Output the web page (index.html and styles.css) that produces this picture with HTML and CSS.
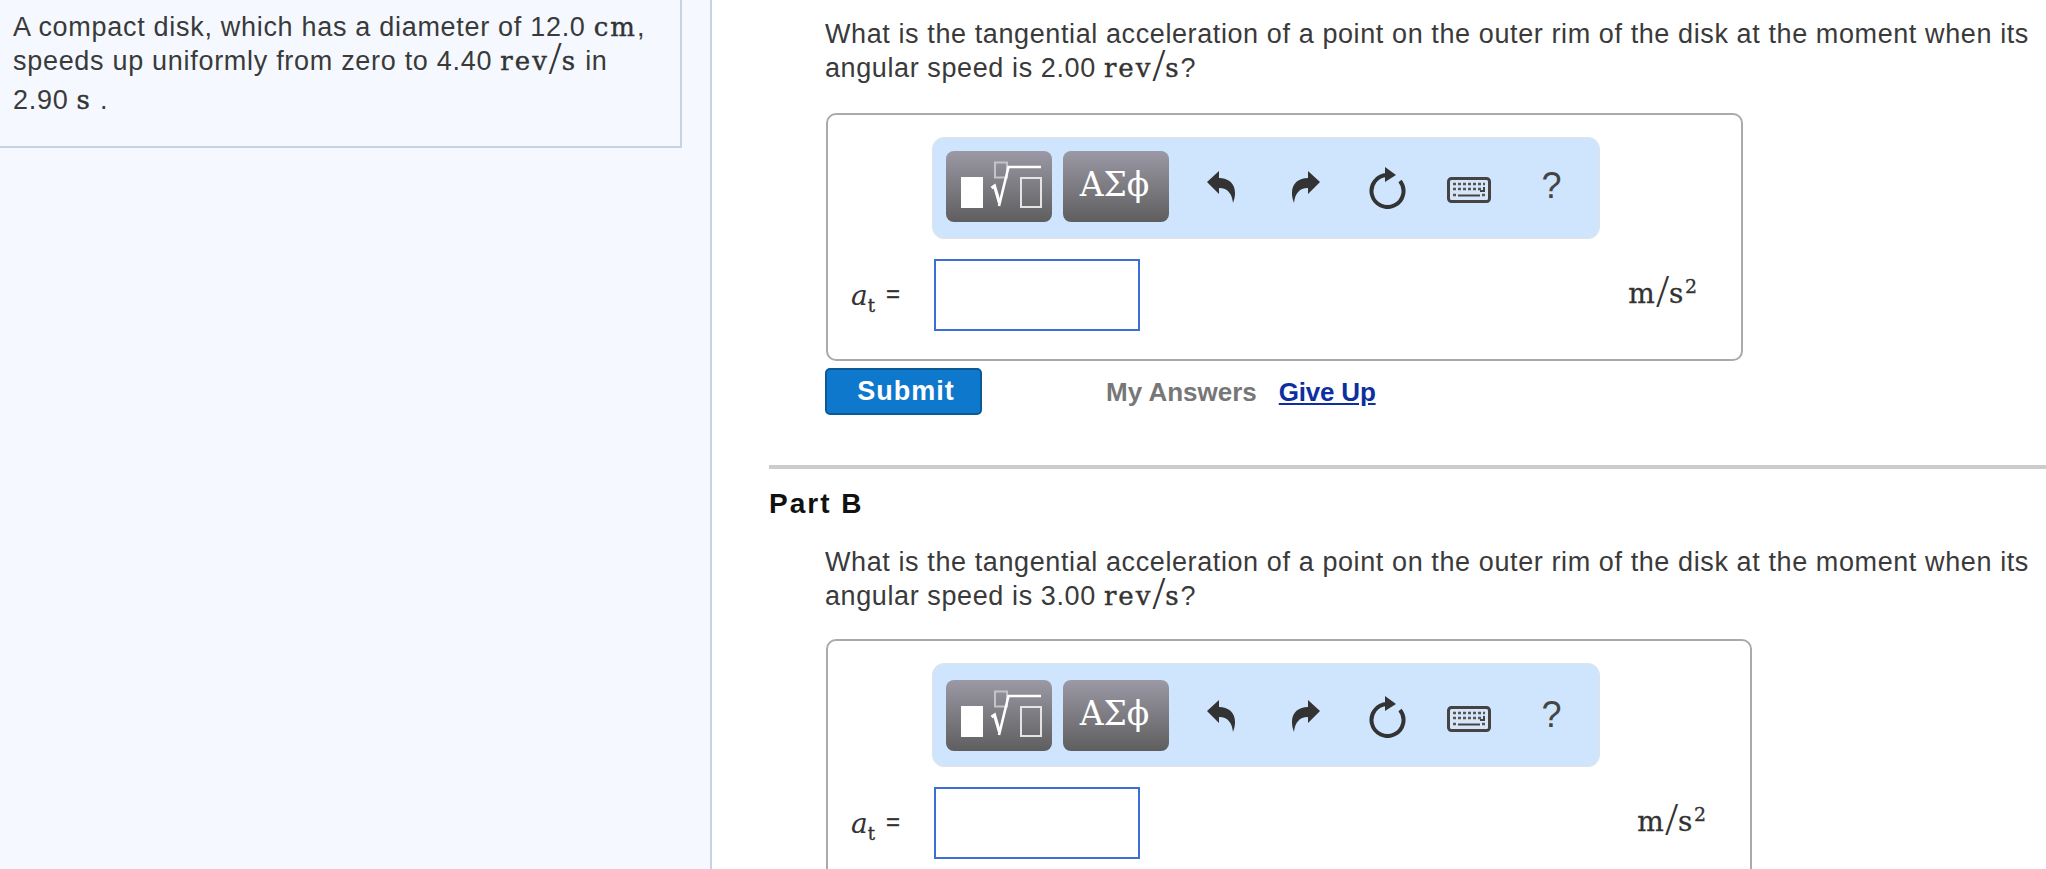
FILE: index.html
```html
<!DOCTYPE html>
<html lang="en">
<head>
<meta charset="utf-8">
<title>Part B</title>
<link rel="stylesheet" href="styles.css">
</head>
<body>
<svg class="defs" aria-hidden="true">
  <symbol id="i-tpl" viewBox="0 0 106 71">
    <rect x="15" y="26" width="22" height="31" fill="#fff"/>
    <rect x="49" y="11.500" width="12" height="15" fill="none" stroke="#c4c4c8" stroke-width="2"/>
    <path d="M45.500 37 L48.500 35 L53.500 52" fill="none" stroke="#fff" stroke-width="3.200"/>
    <path d="M53 55 L62.500 16 H95" fill="none" stroke="#fff" stroke-width="2.600"/>
    <rect x="75" y="27" width="20" height="29" fill="none" stroke="#e4e4e4" stroke-width="2"/>
  </symbol>
  <symbol id="i-undo" viewBox="0 0 30 34">
    <path d="M0 13 L12 2 V9 C24 9 32 18 26 34 C25 25 21 19 12 19 V25 Z" fill="#333"/>
  </symbol>
  <symbol id="i-refresh" viewBox="0 0 38 42">
    <path d="M19 8 A16 16 0 1 0 32 14" fill="none" stroke="#333" stroke-width="4"/>
    <path d="M17 0 L28 8 L17 15 Z" fill="#333"/>
  </symbol>
  <symbol id="i-kbd" viewBox="0 0 44 26">
    <rect x="1.500" y="1.500" width="41" height="23" rx="3" fill="#d6e6f8" stroke="#444" stroke-width="3"/>
    <path d="M6 7 H38 M6 12 H34 M6 18 H9 M35 18 H38" stroke="#555" stroke-width="2.500" stroke-dasharray="3 2" fill="none"/>
    <path d="M37 10 V14 H33 M11 18.500 H33" stroke="#444" stroke-width="2" fill="none"/>
  </symbol>
</svg>
<div class="page">
  <aside class="side">
    <div class="problem">
      <p>A compact disk, which has a diameter of 12.0 <span class="m">cm</span>, speeds up uniformly from zero to 4.40 <span class="m">rev<span class="sl">/</span>s</span> in <span class="nb">2.90 <span class="m">s</span> .</span></p>
    </div>
  </aside>
  <main class="main">
    <section class="part part-a">
      <p class="q">What is the tangential acceleration of a point on the outer rim of the disk at the moment when its angular speed is 2.00 <span class="m">rev<span class="sl">/</span>s</span>?</p>
      <div class="answer answer-a">
        <div class="toolbar">
          <button class="tool"><svg class="tool-icon"><use href="#i-tpl"/></svg></button>
          <button class="tool tool-text">ΑΣϕ</button>
          <span class="act"><svg class="ic-arrow"><use href="#i-undo"/></svg></span>
          <span class="act"><svg class="ic-arrow flip"><use href="#i-undo"/></svg></span>
          <span class="act"><svg class="ic-refresh"><use href="#i-refresh"/></svg></span>
          <span class="act"><svg class="ic-kbd"><use href="#i-kbd"/></svg></span>
          <span class="act help">?</span>
        </div>
        <div class="row">
          <label class="lab"><i>a</i><sub>t</sub><span class="eq">=</span></label>
          <span class="input"></span>
          <span class="unit">m<span class="sl">/</span>s<sup>2</sup></span>
        </div>
      </div>
      <div class="actions">
        <button class="submit">Submit</button>
        <span class="mine">My Answers</span>
        <a class="giveup" href="#">Give Up</a>
      </div>
    </section>
    <hr class="rule">
    <section class="part">
      <h2 class="ptitle">Part B</h2>
      <p class="q">What is the tangential acceleration of a point on the outer rim of the disk at the moment when its angular speed is 3.00 <span class="m">rev<span class="sl">/</span>s</span>?</p>
      <div class="answer answer-b">
        <div class="toolbar">
          <button class="tool"><svg class="tool-icon"><use href="#i-tpl"/></svg></button>
          <button class="tool tool-text">ΑΣϕ</button>
          <span class="act"><svg class="ic-arrow"><use href="#i-undo"/></svg></span>
          <span class="act"><svg class="ic-arrow flip"><use href="#i-undo"/></svg></span>
          <span class="act"><svg class="ic-refresh"><use href="#i-refresh"/></svg></span>
          <span class="act"><svg class="ic-kbd"><use href="#i-kbd"/></svg></span>
          <span class="act help">?</span>
        </div>
        <div class="row">
          <label class="lab"><i>a</i><sub>t</sub><span class="eq">=</span></label>
          <span class="input"></span>
          <span class="unit">m<span class="sl">/</span>s<sup>2</sup></span>
        </div>
      </div>
    </section>
  </main>
</div>
</body>
</html>
```
FILE: styles.css
```css
* { box-sizing: border-box; }
html, body { margin: 0; height: 869px; overflow: hidden; background: #fff; }
body { font-family: "Liberation Sans", Arial, sans-serif; font-size: 27px; line-height: 34px; letter-spacing: .6px; color: #3a3a3a; }
.defs { width: 0; height: 0; display: block; }
p { margin: 0; }
.page { display: flex; height: 869px; }

.side { width: 712px; flex: none; background: #f5f9ff; border-right: 2px solid #c6d3e2; }
.problem { width: 682px; height: 148px; padding: 10px 30px 0 13px; letter-spacing: .7px; border-right: 2px solid #c6d3e2; border-bottom: 2px solid #c6d3e2; }
.nb { white-space: nowrap; display: inline-block; margin-top: 5px; }

.m { font-family: "DejaVu Serif", serif; font-size: 26px; letter-spacing: 2px; color: #333; -webkit-text-stroke: .4px #333; }
.sl { font-family: "Liberation Serif", serif; font-size: 46px; line-height: 20px; font-weight: normal; letter-spacing: 0; vertical-align: -4px; -webkit-text-stroke: 0; }

.main { flex: 1; min-width: 0; padding-left: 57px; overflow: hidden; }
.part { padding-left: 56px; position: relative; }
.part-a { padding-top: 17px; }
.q { width: 1225px; }

.answer { border: 2px solid #aaa; border-radius: 10px; margin: 28px 0 0 1px; padding: 22px 0 28px; background: #fff; letter-spacing: 0; }
.answer-a { width: 917px; }
.answer-b { width: 926px; margin-top: 26px; }

.toolbar { display: flex; align-items: center; width: 668px; height: 102px; margin-left: 104px; padding: 0 0 4px 13px; background: #cfe5fe; border: 1px solid #dfe3e8; border-radius: 12px; }
.answer-b .toolbar { height: 104px; padding-bottom: 0; }
.tool { width: 106px; height: 71px; padding: 0; margin-right: 11px; border: 0; border-radius: 8px; background: linear-gradient(#9b99a5, #5e5e5e); color: #fff; display: flex; align-items: center; justify-content: center; }
.tool-text { font-family: "DejaVu Serif", serif; font-size: 33px; padding: 0 3px 4px 0; }
.tool-icon { width: 106px; height: 71px; display: block; }
.act { width: 83px; display: flex; justify-content: center; align-items: center; }
.ic-arrow { width: 30px; height: 34px; }
.flip { transform: scaleX(-1); }
.ic-refresh { width: 38px; height: 42px; margin: 4px 2px 0 0; }
.ic-kbd { width: 44px; height: 26px; margin: 8px 4px 0 0; }
.help { font-size: 36px; color: #444; margin: 0 0 0 -2px; }

.row { display: flex; align-items: center; margin-top: 20px; padding: 0 44px 0 23px; }
.lab { width: 83px; flex: none; font-family: "DejaVu Serif", serif; font-size: 28px; color: #333; white-space: nowrap; }
.lab sub { font-family: "DejaVu Serif", serif; font-size: 18px; line-height: 0; -webkit-text-stroke: .4px #333; }
.eq { font-family: "Liberation Sans", sans-serif; font-size: 24px; margin-left: 11px; vertical-align: 3px; -webkit-text-stroke: .3px #333; }
.input { width: 206px; height: 72px; border: 2px solid #3a6fd8; background: #fff; }
.unit { margin-left: auto; font-family: "DejaVu Serif", serif; font-size: 28px; letter-spacing: 1.5px; color: #333; margin-top: -2px; -webkit-text-stroke: .3px #333; }
.unit sup { font-size: 19px; line-height: 0; letter-spacing: 0; }

.actions { display: flex; align-items: center; margin-top: 7px; letter-spacing: 0; }
.submit { width: 157px; height: 47px; padding: 0 0 0 5px; border: 2px solid #0a5a96; border-radius: 5px; background: #0e78cd; color: #fff; font: bold 27px "Liberation Sans", sans-serif; letter-spacing: 1px; }
.mine { margin-left: 124px; font-weight: bold; font-size: 26px; color: #777; }
.giveup { margin-left: 22px; font-weight: bold; font-size: 26px; letter-spacing: -.2px; color: #0f2fa0; }

.rule { margin: 50px 0 0; height: 4px; border: 0; background: #ccc; }
.ptitle { margin: 18px 0 24px -56px; font-size: 28px; line-height: 34px; color: #111; letter-spacing: 2px; }
```
